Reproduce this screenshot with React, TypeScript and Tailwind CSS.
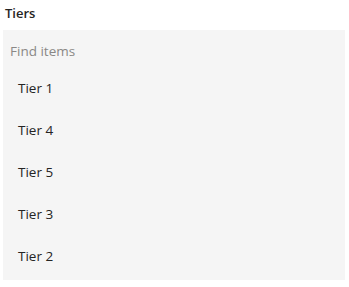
import React, { useState } from 'react';

const tiers = ['Tier 1', 'Tier 4', 'Tier 5', 'Tier 3', 'Tier 2'];

const App: React.FC = () => {
  const [query, setQuery] = useState('');

  const visible = tiers.filter((t) => t.toLowerCase().includes(query.toLowerCase()));

  return (
    <div
      className="w-[349px] h-[287px] bg-white text-[#252423]"
      style={{ fontFamily: '"Open Sans", "Noto Sans", sans-serif' }}
    >
      <div className="h-[30px] pl-[5px] pt-[4px]">
        <h2 className="text-[13px] font-semibold leading-[18px]">Tiers</h2>
      </div>

      <div className="ml-[3px] w-[342px] h-[250px] bg-[#f5f5f5] flex flex-col">
        <div className="h-[37px] pl-[7px] pt-[8px]">
          <input
            type="text"
            placeholder="Find items"
            value={query}
            onChange={(e) => setQuery(e.target.value)}
            className="w-[200px] bg-transparent text-[13.5px] leading-[20px] placeholder-[#8a8886] focus:outline-none"
          />
        </div>
        <ul className="flex flex-col">
          {visible.map((tier) => (
            <li key={tier} className="h-[42px] pl-[15px] flex items-center text-[13.5px]">
              {tier}
            </li>
          ))}
        </ul>
      </div>
    </div>
  );
};

export default App;
